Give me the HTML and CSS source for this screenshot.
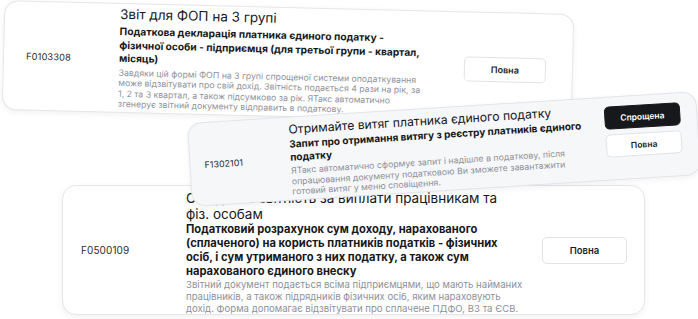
FILE: index.html
```html
<!DOCTYPE html>
<html lang="uk">
<head>
<meta charset="utf-8">
<link rel="stylesheet" href="styles.css">
</head>
<body>
<div class="canvas">
  <div class="card card-a">
    <div class="code">F0103308</div>
    <div class="body">
      <div class="title">Звіт для ФОП на 3 групі</div>
      <div class="sub">Податкова декларація платника єдиного податку -<br>фізичної особи - підприємця (для третьої групи - квартал,<br>місяць)</div>
      <div class="desc">Завдяки цій формі ФОП на 3 групі спрощеної системи оподаткування<br>може відзвітувати про свій дохід. Звітність подається 4 рази на рік, за<br>1, 2 та 3 квартал, а також підсумково за рік. ЯТакс автоматично<br>згенерує звітний документу відправить в податкову.</div>
    </div>
    <div class="actions">
      <button class="btn">Повна</button>
    </div>
  </div>

  <div class="card card-c">
    <div class="code">F0500109</div>
    <div class="body">
      <div class="title">Об'єднана звітність за виплати працівникам та<br>фіз. особам</div>
      <div class="sub">Податковий розрахунок сум доходу, нарахованого<br>(сплаченого) на користь платників податків - фізичних<br>осіб, і сум утриманого з них податку, а також сум<br>нарахованого єдиного внеску</div>
      <div class="desc">Звітний документ подається всіма підприємцями, що мають найманих<br>працівників, а також підрядників фізичних осіб, яким нараховують<br>дохід. Форма допомагає відзвітувати про сплачене ПДФО, ВЗ та ЄСВ.</div>
    </div>
    <div class="actions">
      <button class="btn">Повна</button>
    </div>
  </div>

  <div class="card card-b">
    <div class="code">F1302101</div>
    <div class="body">
      <div class="title">Отримайте витяг платника єдиного податку</div>
      <div class="sub">Запит про отримання витягу з реєстру платників єдиного<br>податку</div>
      <div class="desc">ЯТакс автоматично сформує запит і надішле в податкову, після<br>опрацювання документу податковою Ви зможете завантажити<br>готовий витяг у меню сповіщення.</div>
    </div>
    <div class="actions stack">
      <button class="btn dark">Спрощена</button>
      <button class="btn">Повна</button>
    </div>
  </div>
</div>
</body>
</html>
```
FILE: styles.css
```css
* { box-sizing: border-box; }
html, body { margin: 0; padding: 0; background: #ffffff; }
body {
  font-family: Inter, "Noto Sans", "DejaVu Sans", sans-serif;
  color: #141518;
  width: 698px;
  height: 319px;
  overflow: hidden;
}
.canvas { position: relative; width: 698px; height: 319px; }

.card {
  position: absolute;
  display: flex;
  align-items: center;
  background: #ffffff;
  border: 1px solid #e4e6ea;
  border-radius: 14px;
  box-shadow: 0 2px 6px rgba(20, 24, 40, 0.06);
}
.code {
  color: #2a2c30;
  letter-spacing: 0.1px;
}
.body { display: flex; flex-direction: column; }
.title { font-weight: 400; color: #16171a; }
.sub { font-weight: 700; color: #17181b; }
.desc { color: #8d9199; }
.actions { margin-left: auto; display: flex; flex-direction: column; gap: 5px; }
.btn {
  font-family: inherit;
  font-weight: 600;
  color: #1d1e22;
  background: #ffffff;
  border: 1px solid #e1e3e7;
  border-radius: 5px;
  padding: 0;
}
.btn.dark { background: #17181b; color: #ffffff; border-color: #17181b; }

/* card A - top */
.card-a {
  left: 3px; top: 7px; width: 570px; height: 110px;
  transform: rotate(1.4deg);
  padding: 0 26px 0 22px;
}
.card-a .code { width: 93px; font-size: 9.3px; }
.card-a .body { margin-top: 0; }
.card-a .title { font-size: 13.5px; line-height: 17px; margin-bottom: 2px; }
.card-a .sub { font-size: 10.2px; line-height: 13.5px; margin-bottom: 2px; }
.card-a .desc { font-size: 8.7px; line-height: 10.5px; }
.card-a .actions { margin-top: 4px; }
.card-a .btn { width: 82px; height: 25px; font-size: 9px; }

/* card C - bottom */
.card-c {
  left: 62px; top: 185px; width: 583px; height: 130px;
  padding: 0 17px 0 18px;
}
.card-c .code { width: 105px; font-size: 10px; }
.card-c .body { margin-top: 5px; }
.card-c .title { font-size: 13.5px; line-height: 16px; margin-bottom: 1px; }
.card-c .sub { font-size: 11.2px; line-height: 13.8px; margin-bottom: 1px; }
.card-c .desc { font-size: 9.6px; line-height: 11.8px; }
.card-c .btn { width: 85px; height: 27px; font-size: 9.5px; }

/* card B - middle, tilted */
.card-b {
  left: 189px; top: 107px; width: 510px; height: 84px;
  transform: rotate(-3.6deg);
  background: #f6f7f9;
  border-color: #e3e5e9;
  padding: 0 16px 0 14px;
}
.card-b .code { width: 86px; font-size: 8.8px; }
.card-b .body { margin-top: 2px; }
.card-b .title { font-size: 12.2px; line-height: 15px; margin-bottom: 1px; }
.card-b .sub { font-size: 10px; line-height: 12.4px; margin-bottom: 3px; }
.card-b .desc { font-size: 8.8px; line-height: 10.4px; }
.card-b .actions { align-self: flex-start; margin-top: 9px; gap: 5px; }
.card-b .btn { width: 76px; height: 23px; font-size: 8.5px; }
```
